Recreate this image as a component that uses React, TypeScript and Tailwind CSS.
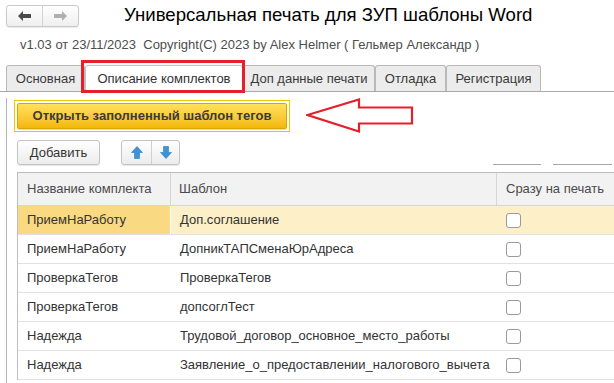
import React from 'react'

const rows = [
  { name: 'ПриемНаРаботу', tpl: 'Доп.соглашение' },
  { name: 'ПриемНаРаботу', tpl: 'ДопникТАПСменаЮрАдреса' },
  { name: 'ПроверкаТегов', tpl: 'ПроверкаТегов' },
  { name: 'ПроверкаТегов', tpl: 'допсоглТест' },
  { name: 'Надежда', tpl: 'Трудовой_договор_основное_место_работы' },
  { name: 'Надежда', tpl: 'Заявление_о_предоставлении_налогового_вычета' },
]

function NavArrow({ dir, color }: { dir: 'left' | 'right'; color: string }) {
  return (
    <svg width="13" height="10" viewBox="0 0 13 10">
      {dir === 'left' ? (
        <path d="M0 5 L5 0 L5 3 L13 3 L13 7 L5 7 L5 10 Z" fill={color} />
      ) : (
        <path d="M13 5 L8 0 L8 3 L0 3 L0 7 L8 7 L8 10 Z" fill={color} />
      )}
    </svg>
  )
}

function BlueArrow({ up }: { up: boolean }) {
  return (
    <svg width="12" height="13" viewBox="0 0 12 13">
      <g transform={up ? '' : 'rotate(180 6 6.5)'}>
        <path d="M6 0.5 L11.5 6.5 L8.5 6.5 L8.5 12.5 L3.5 12.5 L3.5 6.5 L0.5 6.5 Z" fill="#3d93d6" stroke="#2a7cc0" strokeWidth="0.6" />
      </g>
    </svg>
  )
}

export default function App() {
  const tabs = [
    { label: 'Основная', w: 'w-[79px]' },
    { label: 'Описание комплектов', w: 'w-[158px]', active: true },
    { label: 'Доп данные печати', w: 'w-[132px]' },
    { label: 'Отладка', w: 'w-[71px]' },
    { label: 'Регистрация', w: 'w-[95px]' },
  ]

  return (
    <div className="relative w-[614px] h-[383px] overflow-hidden bg-white text-[#333] font-['Liberation_Sans',Arial,sans-serif]">
      {/* Header */}
      <div className="flex items-center pt-[5px] pl-[6px] h-[27px]">
        <div className="flex h-[22px] w-[73px] rounded-[3px] border border-[#c9c9c9] bg-gradient-to-b from-white to-[#efefef] shadow-[0_1px_1px_rgba(0,0,0,0.08)]">
          <div className="flex w-[36px] items-center justify-center border-r border-[#d4d4d4]">
            <NavArrow dir="left" color="#4a4a4a" />
          </div>
          <div className="flex flex-1 items-center justify-center">
            <NavArrow dir="right" color="#b0b0b0" />
          </div>
        </div>
        <div className="ml-[45px] -mt-[1px] text-[18.6px] leading-none text-black">
          Универсальная печать для ЗУП шаблоны Word
        </div>
      </div>

      {/* Version */}
      <div className="mt-[11px] pl-[20px] text-[13px] leading-[14px] text-[#4d4d4d] whitespace-pre">
        v1.03 от 23/11/2023  Copyright(C) 2023 by Alex Helmer ( Гельмер Александр )
      </div>

      {/* Tabs */}
      <div className="mt-[13px] flex h-[27px] items-end border-b border-[#a9a9a9] pl-[6px]">
        {tabs.map((t) => (
          <div
            key={t.label}
            className={`${t.w} flex h-[26px] items-center justify-center rounded-t-[3px] border border-b-0 text-[13px] ${
              t.active ? 'border-[#c4c4c4] bg-white text-[#333]' : 'border-[#b9b9b9] bg-[#ececec] text-[#3a3a3a]'
            }`}
          >
            {t.label}
          </div>
        ))}
      </div>

      {/* Red annotation box around active tab */}
      <div className="absolute left-[81px] top-[60px] h-[33px] w-[164px] border-[3px] border-[#e5202b]" />

      {/* Panel */}
      <div className="ml-[6px] h-[300px] border-l border-[#b5b5b5] pl-[7px]">
        <div className="mt-[6px] flex items-center">
          <div className="border border-[#f2c200] p-[2px]">
            <div className="flex h-[26px] w-[270px] items-center justify-center rounded-[2px] border border-[#d9a800] bg-gradient-to-b from-[#ffe15a] to-[#f4b800] text-[13px] font-bold text-[#3b3b3b] shadow-[0_1px_1px_rgba(0,0,0,0.15)]">
              Открыть заполненный шаблон тегов
            </div>
          </div>
          <svg className="ml-[16px]" width="108" height="36" viewBox="0 0 108 36">
            <path
              d="M1.5 17 L53 1.5 L53 9.5 L106 9.5 L106 25.5 L53 25.5 L53 33.5 Z"
              fill="none"
              stroke="#e5202b"
              strokeWidth="2.2"
              strokeLinejoin="miter"
            />
          </svg>
        </div>

        {/* Toolbar */}
        <div className="mt-[6px] flex h-[25px] items-stretch pl-[3px]">
          <div className="flex w-[83px] items-center justify-center rounded-[3px] border border-[#c3c3c3] bg-gradient-to-b from-white to-[#ececec] text-[13px] text-[#333] shadow-[0_1px_1px_rgba(0,0,0,0.1)]">
            Добавить
          </div>
          <div className="ml-[21px] flex w-[59px] rounded-[3px] border border-[#c3c3c3] bg-gradient-to-b from-white to-[#ececec] shadow-[0_1px_1px_rgba(0,0,0,0.1)]">
            <div className="flex w-[30px] items-center justify-center border-r border-[#d0d0d0]">
              <BlueArrow up />
            </div>
            <div className="flex flex-1 items-center justify-center">
              <BlueArrow up={false} />
            </div>
          </div>
          <div className="ml-auto mr-[2px] flex items-end">
            <div className="h-px w-[48px] bg-[#a8a8a8]" />
            <div className="ml-[12px] h-px w-[59px] bg-[#a8a8a8]" />
          </div>
        </div>

        {/* Table */}
        <div className="mt-[7px] ml-[3px] w-[600px] border-l border-t border-[#bdbdbd] text-[13px]">
          <div className="flex h-[33px] border-b border-[#d6d6d6] bg-[#f2f2f2] text-[#4a4a4a]">
            <div className="flex w-[153px] items-center border-r border-[#d6d6d6] pl-[9px]">Название комплекта</div>
            <div className="flex w-[326px] items-center border-r border-[#d6d6d6] pl-[8px]">Шаблон</div>
            <div className="flex flex-1 items-center pl-[9px]">Сразу на печать</div>
          </div>
          {rows.map((r, i) => (
            <div key={i} className="flex h-[29px] border-b border-[#e2e2e2] text-[#333]">
              <div
                className={`flex w-[153px] items-center pl-[9px] ${
                  i === 0 ? 'bg-[#f9d982] border-r border-white' : ''
                }`}
              >
                {r.name}
              </div>
              <div className={`flex w-[326px] items-center pl-[9px] ${i === 0 ? 'bg-[#fdefc8]' : ''}`}>{r.tpl}</div>
              <div className={`flex flex-1 items-center pl-[9px] ${i === 0 ? 'bg-[#fdefc8]' : ''}`}>
                <div className="h-[15px] w-[15px] rounded-[3px] border border-[#9a9a9a] bg-white" />
              </div>
            </div>
          ))}
        </div>
      </div>
    </div>
  )
}
